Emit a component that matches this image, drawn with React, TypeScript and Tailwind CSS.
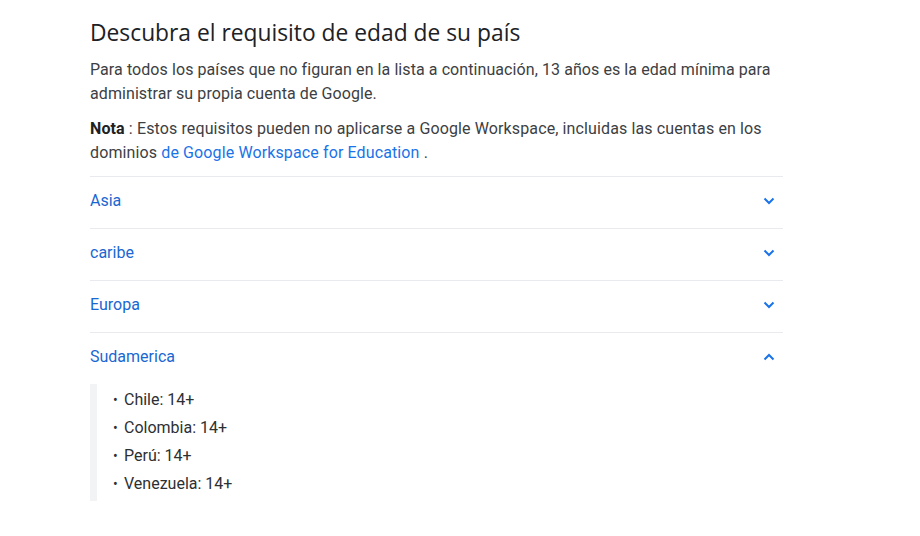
import React, { useState } from "react";

const regions: { name: string; items: string[] }[] = [
  { name: "Asia", items: [] },
  { name: "caribe", items: [] },
  { name: "Europa", items: [] },
  { name: "Sudamerica", items: ["Chile: 14+", "Colombia: 14+", "Perú: 14+", "Venezuela: 14+"] },
];

function Chevron({ up }: { up: boolean }) {
  return (
    <svg width="12" height="8" viewBox="0 0 12 8" className={up ? "rotate-180" : ""}>
      <path d="M1.5 1.5 L6 6 L10.5 1.5" fill="none" stroke="#1a73e8" strokeWidth="2" />
    </svg>
  );
}

export default function App(): React.ReactElement {
  const [open, setOpen] = useState<string>("Sudamerica");

  return (
    <div className="min-h-screen bg-white font-['Roboto','Liberation_Sans',sans-serif]">
      <div className="w-[693px] ml-[90px] pt-[18px]">
        <h2 className="font-['Open_Sans','Roboto',sans-serif] text-[22.8px] leading-[30px] text-[#202124]">
          Descubra el requisito de edad de su país
        </h2>

        <p className="mt-[10px] text-[16px] leading-[24px] tracking-[0.08px] text-[#3c4043]">
          Para todos los países que no figuran en la lista a continuación, 13 años es la edad mínima para
          administrar su propia cuenta de Google.
        </p>

        <p className="mt-[11px] text-[16px] leading-[24px] tracking-[0.12px] text-[#3c4043]">
          <b className="font-bold text-[#202124]">Nota</b> : Estos requisitos pueden no aplicarse a Google
          Workspace, incluidas las cuentas en los dominios{" "}
          <a href="#" className="text-[#1a73e8]">de Google Workspace for Education</a> .
        </p>

        {/* Accordion */}
        <div className="mt-[11px]">
          {regions.map((r) => {
            const isOpen = open === r.name;
            return (
              <div key={r.name} className="border-t border-[#e8eaed]">
                <button
                  className="flex w-full h-[51px] pb-[3px] items-center justify-between text-left"
                  onClick={() => setOpen(isOpen ? "" : r.name)}
                >
                  <span className="text-[16px] text-[#1967d2]">{r.name}</span>
                  <span className="mr-[8px] flex items-center">
                    <Chevron up={isOpen} />
                  </span>
                </button>
                {isOpen && r.items.length > 0 && (
                  <div className="flex">
                    <div className="w-[7px] bg-[#f1f3f4]" />
                    <ul className="pl-[16px] pt-[2px] pb-[3px]">
                      {r.items.map((it) => (
                        <li key={it} className="flex items-center h-[28px] text-[16px] text-[#2d3033]">
                          <span className="w-[11px] text-[14px]">•</span>
                          {it}
                        </li>
                      ))}
                    </ul>
                  </div>
                )}
              </div>
            );
          })}
        </div>
      </div>
    </div>
  );
}
